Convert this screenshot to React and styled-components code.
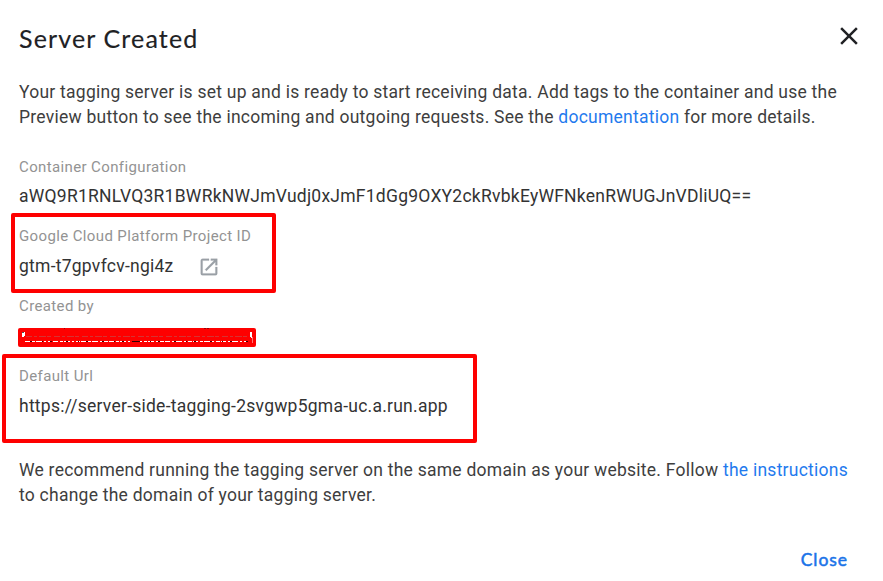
import React from 'react';
import styled, { createGlobalStyle } from 'styled-components';

const GlobalStyle = createGlobalStyle`
  *, *::before, *::after { box-sizing: border-box; }
  body { margin: 0; background: #fff; }
`;

const Dialog = styled.main`
  width: 883px;
  height: 581px;
  padding: 21px 19px 0;
  display: flex;
  flex-direction: column;
  overflow: hidden;
  background: #fff;
  color: #3e3e3e;
  font: 400 17.5px/25px Roboto, 'Liberation Sans', sans-serif;
  letter-spacing: 0.246px;
`;

const Header = styled.header`
  display: flex;
  justify-content: space-between;
  height: 59px;
`;

const Title = styled.h1`
  margin: 0;
  font: 400 25px/34px Lato, 'Open Sans', sans-serif;
  letter-spacing: 1.15px;
  color: #202124;
  -webkit-text-stroke: 0.15px #202124;
`;

const IconButton = styled.button`
  display: flex;
  width: 30px;
  height: 30px;
  padding: 0;
  border: 0;
  background: none;
  color: #202124;
`;

const Paragraph = styled.p`
  margin: 0;
  white-space: nowrap;
`;

const Link = styled.a`
  color: #1f7aee;
  text-decoration: none;
`;

const Fields = styled.dl`
  display: grid;
  grid-template-rows: 69px 70px 70px 94px;
  margin: 25px 0 0;
`;

const Field = styled.div`
  position: relative;
`;

const Label = styled.dt`
  font-size: 15px;
  line-height: 25px;
  letter-spacing: 0.375px;
  color: #939393;
`;

const Value = styled.dd`
  display: flex;
  align-items: center;
  gap: 24.4px;
  height: 25px;
  margin: ${({ $gap }) => $gap}px 0 0;
  color: #333;
`;

const Highlight = styled.div`
  position: absolute;
  left: ${({ $x }) => $x}px;
  top: ${({ $y }) => $y}px;
  width: ${({ $w }) => $w}px;
  height: ${({ $h }) => $h}px;
  border: 4px solid #fe0000;
  border-radius: 2px;
`;

const Redaction = styled.svg`
  display: block;
  flex: none;
  margin-left: -1px;
`;

const Footer = styled.footer`
  display: flex;
  justify-content: flex-end;
  margin-top: 39px;
  padding-right: 16px;
`;

const TextButton = styled.button`
  padding: 0;
  border: 0;
  background: none;
  color: #1a73e8;
  font: 400 17.5px/25px Lato, 'Open Sans', sans-serif;
  letter-spacing: 0.95px;
  -webkit-text-stroke: 0.5px #1a73e8;
`;

const CloseIcon = () => (
  <svg width="30" height="30" viewBox="0 0 24 24" fill="currentColor" aria-hidden="true">
    <path d="M19 6.41 17.59 5 12 10.59 6.41 5 5 6.41 10.59 12 5 17.59 6.41 19 12 13.41 17.59 19 19 17.59 13.41 12z" />
  </svg>
);

const OpenIcon = () => (
  <svg width="22" height="22" viewBox="0 0 24 24" fill="#9aa0a6" stroke="#9aa0a6" strokeWidth="0.3" aria-hidden="true">
    <path d="M19 19H5V5h7V3H5a2 2 0 0 0-2 2v14a2 2 0 0 0 2 2h14a2 2 0 0 0 2-2v-7h-2v7zM14 3v2h3.59l-9.83 9.83 1.41 1.41L19 6.41V10h2V3h-7z" />
  </svg>
);

const RedactedName = () => (
  <Redaction width="238" height="19" viewBox="0 0 238 19" aria-label="Redacted">
    <rect width="238" height="19" rx="2" fill="#fe0000" />
    <path d="M4 4h3v4h-1v1h-2z" fill="#fff" />
    <path d="M4 4h2v1h-2z" fill="#555" />
    <path d="M8 8.5H230" stroke="#d83232" strokeDasharray="6 2 3 2 7 1 4 3" />
    <path d="M7 13.5H231" stroke="#fff" strokeDasharray="5 2 3 1 6 2 2 2 4 1" />
    <path d="M12 13.5H231" stroke="#400" strokeDasharray="2 10 1 7 2 14" />
    <path d="M114 13.5h7" stroke="#300" />
    <path d="M46 .5h1M186 .5h2M189 .5h2" stroke="#900" />
    <path d="M232 4h2v6h-1v-1h-1z" fill="#fff" />
    <path d="M234.5 9v6" stroke="#ff7777" />
  </Redaction>
);

export default function App() {
  return (
    <>
      <GlobalStyle />
      <Dialog>
        <Header>
          <Title>Server Created</Title>
          <IconButton aria-label="Close dialog"><CloseIcon /></IconButton>
        </Header>
        <Paragraph>
          Your tagging server is set up and is ready to start receiving data. Add tags to the container and use the
          <br />
          Preview button to see the incoming and outgoing requests. See the <Link>documentation</Link> for more details.
        </Paragraph>
        <Fields>
          <Field>
            <Label>Container Configuration</Label>
            <Value $gap={4}>aWQ9R1RNLVQ3R1BWRkNWJmVudj0xJmF1dGg9OXY2ckRvbkEyWFNkenRWUGJnVDliUQ==</Value>
          </Field>
          <Field>
            <Label>Google Cloud Platform Project ID</Label>
            <Value $gap={5}>gtm-t7gpvfcv-ngi4z <OpenIcon /></Value>
            <Highlight $x={-8} $y={-11} $w={265} $h={80} />
          </Field>
          <Field>
            <Label>Created by</Label>
            <Value $gap={6}><RedactedName /></Value>
          </Field>
          <Field>
            <Label>Default Url</Label>
            <Value $gap={5}>https://server-side-tagging-2svgwp5gma-uc.a.run.app</Value>
            <Highlight $x={-17} $y={-10} $w={475} $h={89} />
          </Field>
        </Fields>
        <Paragraph>
          We recommend running the tagging server on the same domain as your website. Follow <Link>the instructions</Link>
          <br />
          to change the domain of your tagging server.
        </Paragraph>
        <Footer>
          <TextButton>Close</TextButton>
        </Footer>
      </Dialog>
    </>
  );
}
